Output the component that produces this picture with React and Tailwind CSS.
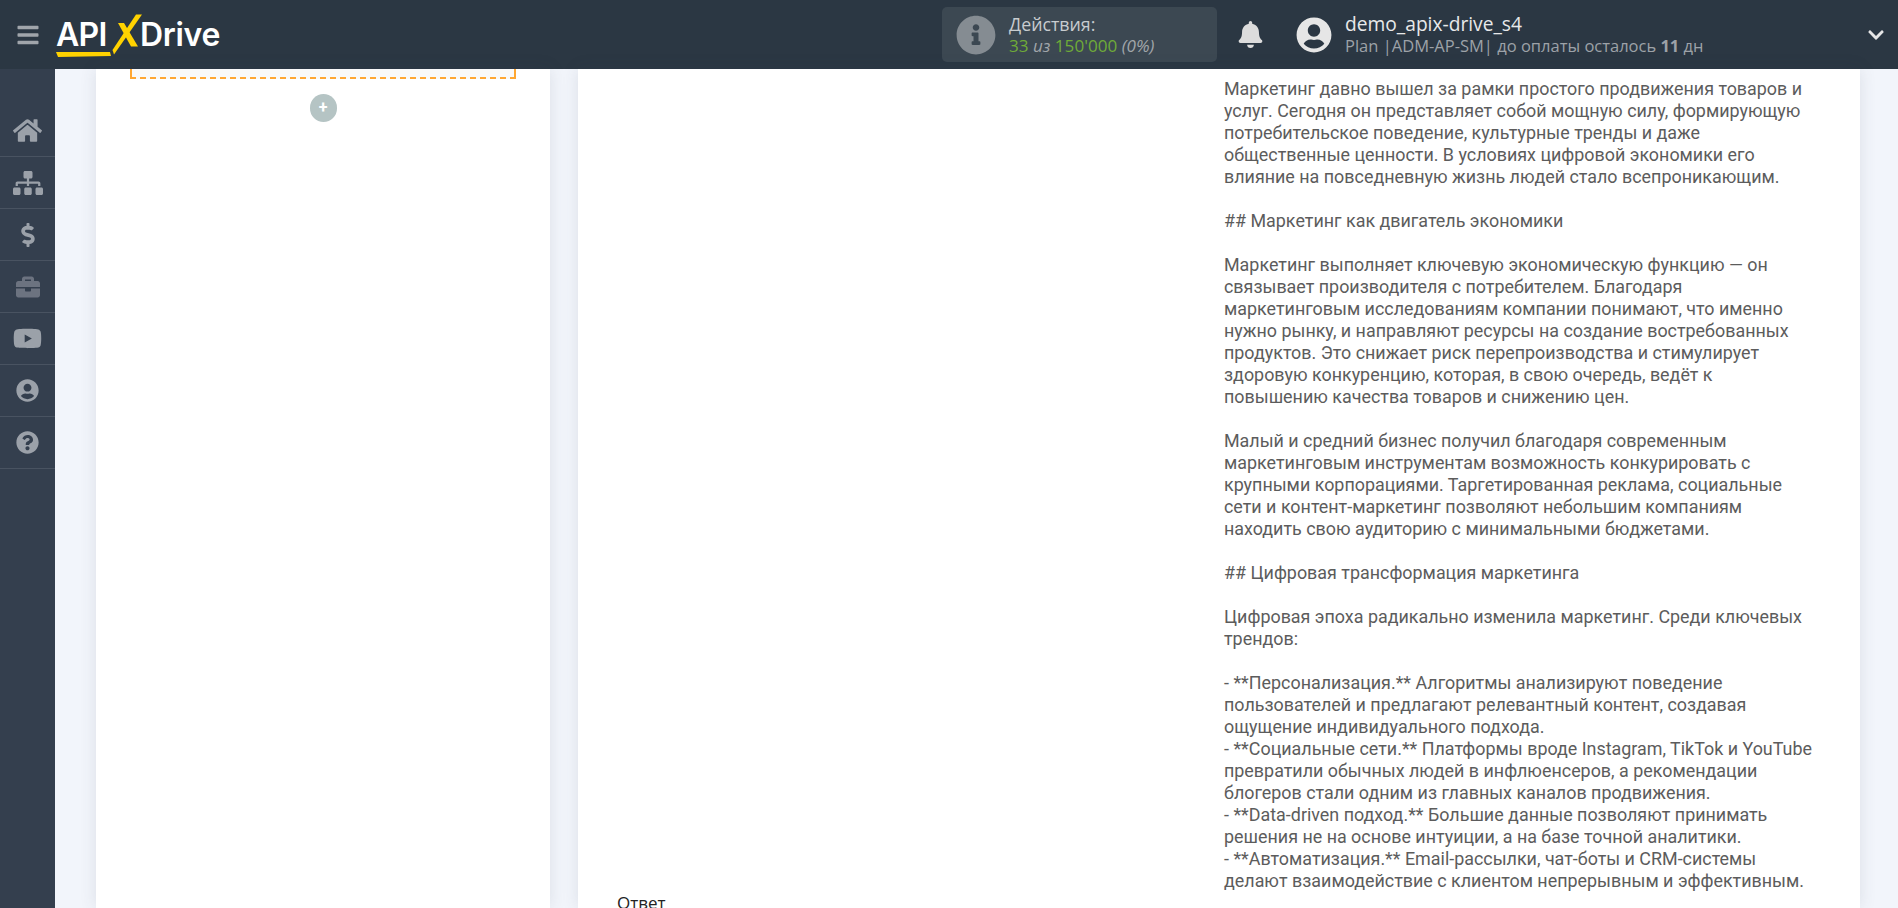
import React from 'react';
import { FaHome, FaSitemap, FaDollarSign, FaBriefcase, FaYoutube, FaUserCircle, FaQuestionCircle, FaBell, FaInfoCircle, FaChevronDown, FaBars } from 'react-icons/fa';

const navItems = [
  { icon: FaHome, size: 'text-[29px]', tone: 'text-[#9ba1a9]' },
  { icon: FaSitemap, size: 'text-[30px]', tone: 'text-[#9ba1a9]' },
  { icon: FaDollarSign, size: 'text-[24px]', tone: 'text-[#9ba1a9]' },
  { icon: FaBriefcase, size: 'text-[24px]', tone: 'text-[#6c7380]' },
  { icon: FaYoutube, size: 'text-[29px]', tone: 'text-[#9ba1a9]' },
  { icon: FaUserCircle, size: 'text-[23px]', tone: 'text-[#9ba1a9]' },
  { icon: FaQuestionCircle, size: 'text-[23px]', tone: 'text-[#9ba1a9]' },
];

const article = [
  'Маркетинг давно вышел за рамки простого продвижения товаров и\nуслуг. Сегодня он представляет собой мощную силу, формирующую\nпотребительское поведение, культурные тренды и даже\nобщественные ценности. В условиях цифровой экономики его\nвлияние на повседневную жизнь людей стало всепроникающим.',
  '## Маркетинг как двигатель экономики',
  'Маркетинг выполняет ключевую экономическую функцию — он\nсвязывает производителя с потребителем. Благодаря\nмаркетинговым исследованиям компании понимают, что именно\nнужно рынку, и направляют ресурсы на создание востребованных\nпродуктов. Это снижает риск перепроизводства и стимулирует\nздоровую конкуренцию, которая, в свою очередь, ведёт к\nповышению качества товаров и снижению цен.',
  'Малый и средний бизнес получил благодаря современным\nмаркетинговым инструментам возможность конкурировать с\nкрупными корпорациями. Таргетированная реклама, социальные\nсети и контент-маркетинг позволяют небольшим компаниям\nнаходить свою аудиторию с минимальными бюджетами.',
  '## Цифровая трансформация маркетинга',
  'Цифровая эпоха радикально изменила маркетинг. Среди ключевых\nтрендов:',
  '- **Персонализация.** Алгоритмы анализируют поведение\nпользователей и предлагают релевантный контент, создавая\nощущение индивидуального подхода.\n- **Социальные сети.** Платформы вроде Instagram, TikTok и YouTube\nпревратили обычных людей в инфлюенсеров, а рекомендации\nблогеров стали одним из главных каналов продвижения.\n- **Data-driven подход.** Большие данные позволяют принимать\nрешения не на основе интуиции, а на базе точной аналитики.\n- **Автоматизация.** Email-рассылки, чат-боты и CRM-системы\nделают взаимодействие с клиентом непрерывным и эффективным.',
];

function Logo() {
  return (
    <div className="relative w-[166px] h-[44px] ml-[1px] text-white font-['Inter',sans-serif] font-semibold text-[32px] leading-[30px]">
      <span className="absolute left-0 top-[7px] tracking-[-0.7px]">API</span>
      <span className="absolute left-[84px] top-[7px] tracking-[-0.3px]">Drive</span>
      <svg className="absolute left-0 top-0" width="166" height="48" viewBox="0 0 166 48">
        <path d="M0 39 L54 39 L55 43 L2 44 Z" fill="#ffd200" />
        <path d="M80 1.5 L86 1.5 L58 41.5 L56.5 37 Z" fill="#ffd200" />
        <path d="M62 10 L68 10 L82 33.5 L75 33.5 Z" fill="#ffd200" />
      </svg>
    </div>
  );
}

export default function App() {
  return (
    <div className="h-[908px] w-full overflow-hidden flex flex-col font-['Roboto',sans-serif] bg-[#f2f5fb]">
      <header className="h-[69px] shrink-0 bg-[#2b3743] flex items-center">
        <div className="w-[55px] flex justify-center">
          <FaBars className="text-[#a0a5ab] text-[24px]" />
        </div>
        <Logo />
        <div className="ml-[720px] w-[275px] h-[55px] rounded-[5px] bg-[#3c4852] flex items-center pl-[14px] gap-[13px] font-['Open_Sans',sans-serif]">
          <FaInfoCircle className="text-[#858c92] text-[40px]" />
          <div className="leading-[22px]">
            <div className="text-[17.8px] text-[#c8cccf]">Действия:</div>
            <div className="text-[17.1px] text-[#6fab38]">33 <span className="italic text-[#a1a6aa]">из</span> 150'000 <span className="italic text-[#a1a6aa]">(0%)</span></div>
          </div>
        </div>
        <FaBell className="ml-[20px] text-[#dcdcdc] text-[27px]" />
        <FaUserCircle className="ml-[32px] text-[#e6e6e6] text-[36px]" />
        <div className="ml-[13px] font-['Open_Sans',sans-serif]">
          <div className="text-[19.2px] leading-[22px] text-[#e8e9ea]">demo_apix-drive_s4</div>
          <div className="text-[16.5px] leading-[21px] text-[#9da2a8]">Plan |ADM-AP-SM| до оплаты осталось <b>11</b> дн</div>
        </div>
        <FaChevronDown className="ml-auto mr-[13px] text-[#e6e6e6] text-[18px]" />
      </header>

      <div className="flex-1 min-h-0 flex">
        <nav className="w-[55px] shrink-0 bg-[#343f4e]">
          <div className="h-[36px]" />
          {navItems.map((item, i) => {
            const Icon = item.icon;
            return (
              <div key={i} className="h-[52px] flex items-center justify-center border-b border-[#495361]">
                <Icon className={`${item.size} ${item.tone}`} />
              </div>
            );
          })}
        </nav>

        <main className="flex-1 min-w-0 flex pl-[41px] pr-[38px] gap-[28px]">
          <section className="w-[454px] shrink-0 bg-white shadow-[0_0_16px_rgba(60,65,80,0.12)]">
            <div className="mx-[34px] h-[10px] bg-[#f9f9f9] border-b-2 border-l-2 border-r-2 border-dashed border-[#ffa733]" />
            <div className="mt-[15px] flex justify-center">
              <div className="w-[27px] h-[28px] rounded-full bg-[#b5c4c4] text-white flex items-center justify-center text-[16px] font-bold leading-none">+</div>
            </div>
          </section>

          <section className="flex-1 min-w-0 bg-white shadow-[0_0_16px_rgba(60,65,80,0.12)] pl-[39px] flex">
            <div className="w-[607px] shrink-0 relative">
              <div className="absolute left-[0px] top-[823px] text-[17px] leading-[22px] text-[#222] font-['Open_Sans',sans-serif]">Ответ</div>
            </div>
            <div className="pt-[9px] text-[17.9px] leading-[22px] text-[#5c5c5c] whitespace-pre-line">
              {article.join('\n\n')}
            </div>
          </section>
        </main>
      </div>
    </div>
  );
}
